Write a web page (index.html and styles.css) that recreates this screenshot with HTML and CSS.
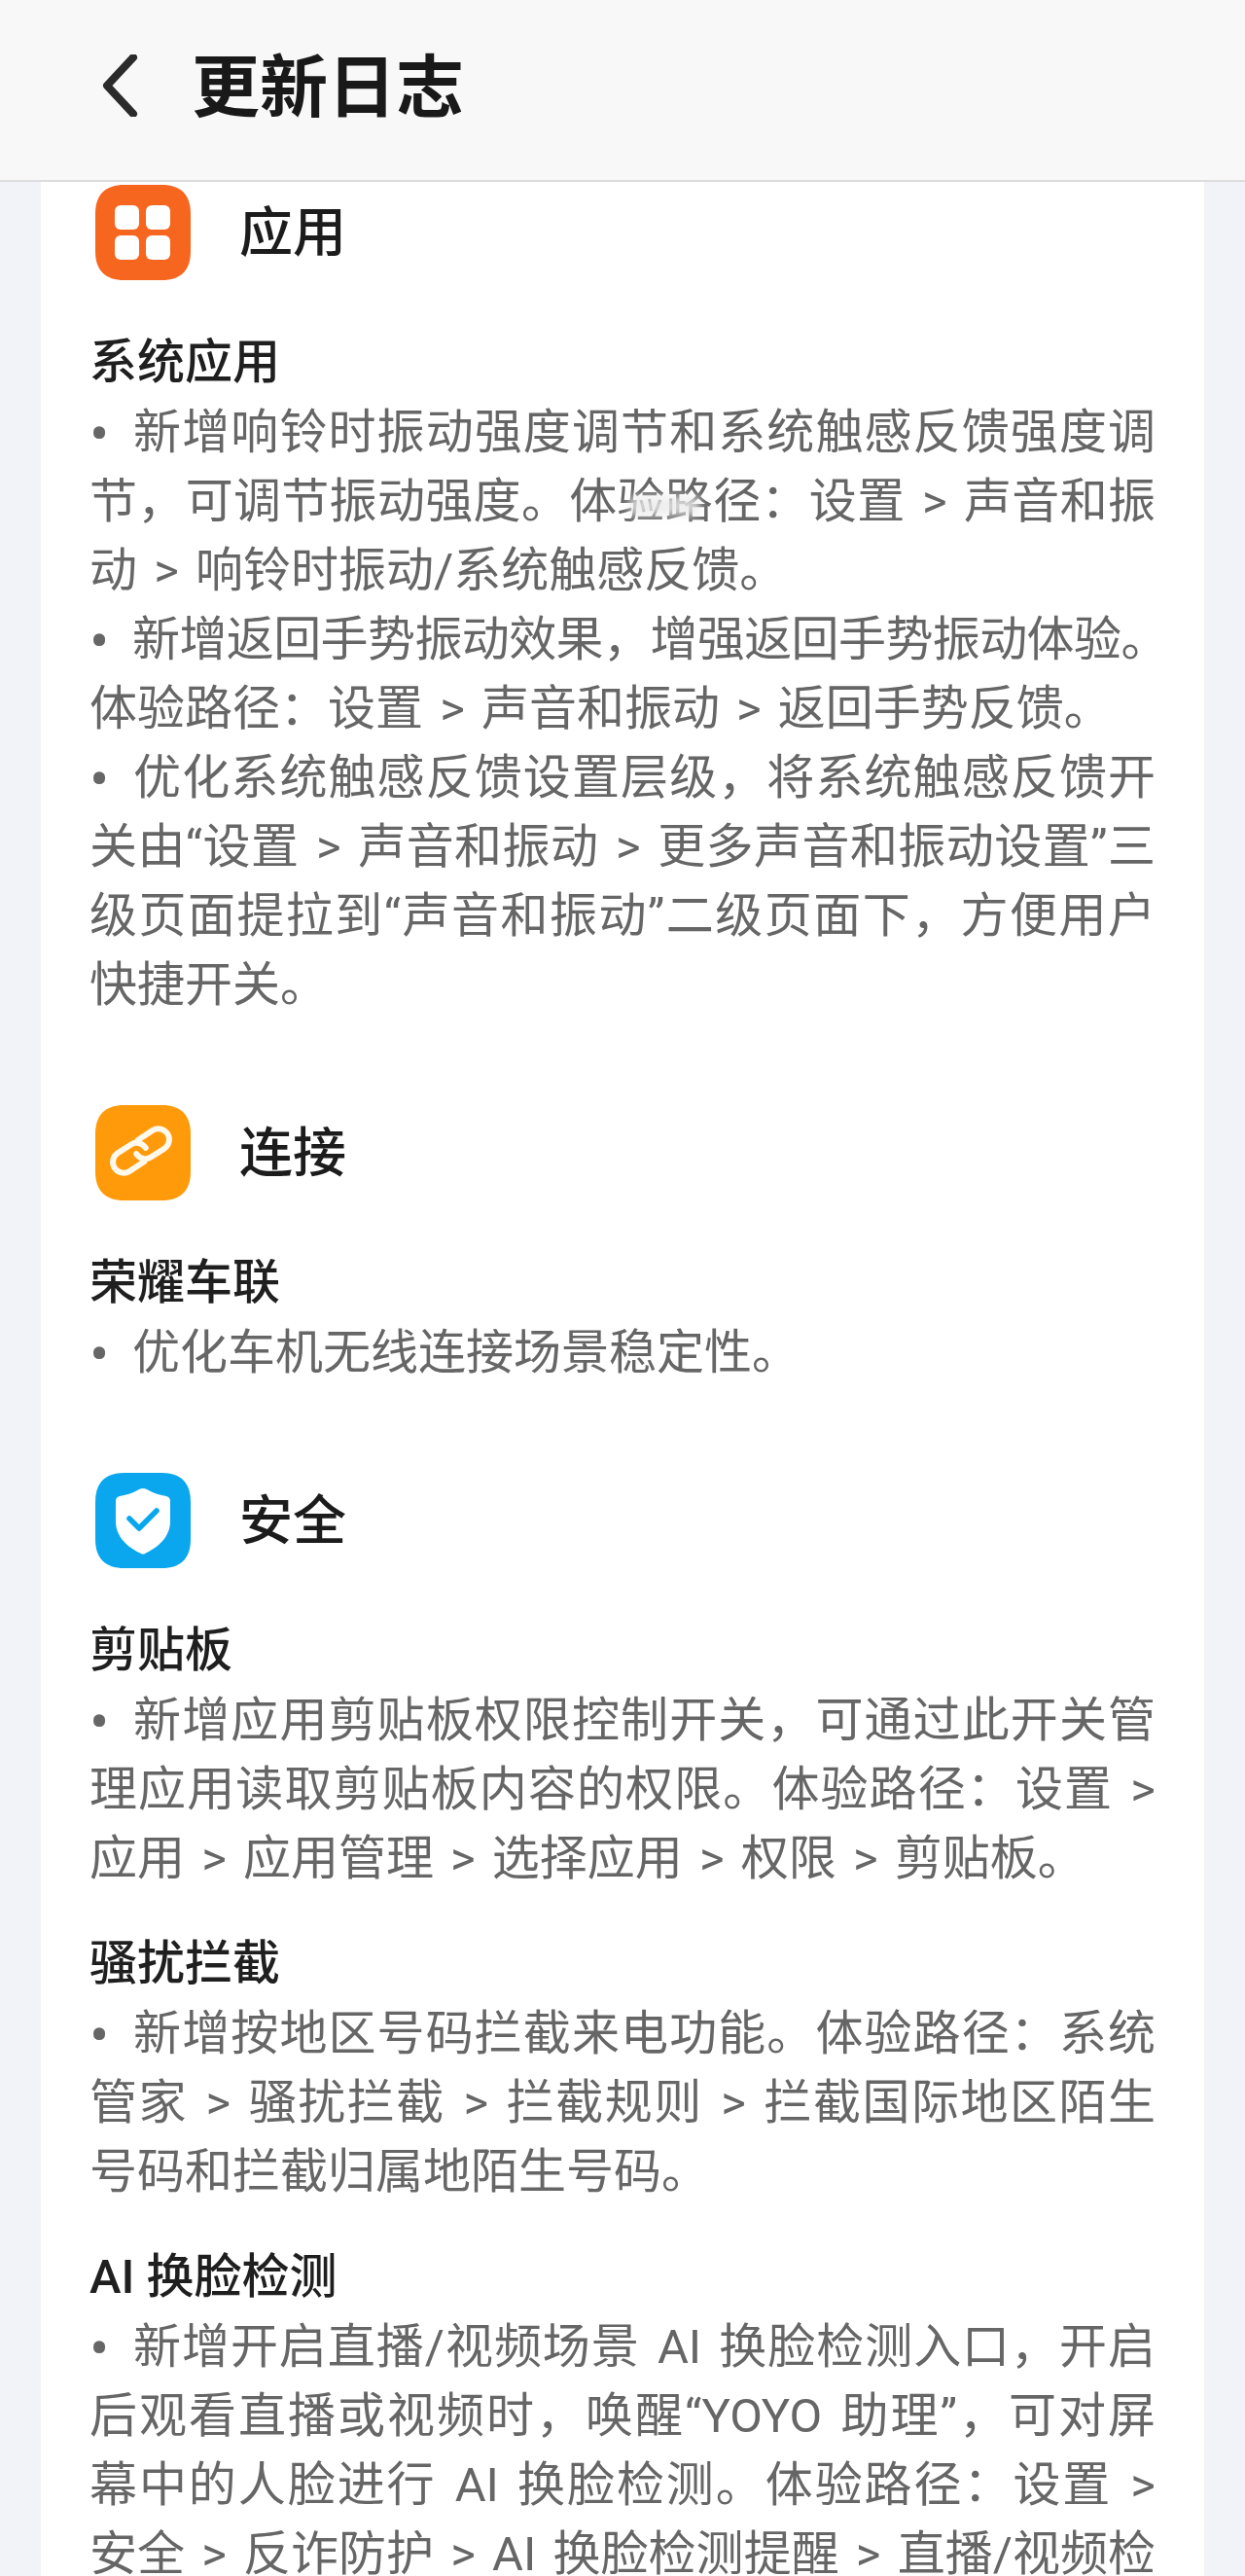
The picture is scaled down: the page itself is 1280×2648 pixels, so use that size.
FILE: index.html
```html
<!DOCTYPE html>
<html lang="zh-CN">
<head>
<meta charset="utf-8">
<title>更新日志</title>
<link rel="stylesheet" href="styles.css">
</head>
<body>
<header class="bar">
  <svg class="back" viewBox="0 0 40 64"><path d="M33 3 L6 32 L33 61" /></svg>
  <h1 class="bar-title">更新日志</h1>
</header>
<main class="card">
  <section class="section first">
    <div class="sec-head">
      <svg class="sec-icon" viewBox="0 0 98 98"><path d="M30 0 H68 C88 0 98 10 98 30 V68 C98 88 88 98 68 98 H30 C10 98 0 88 0 68 V30 C0 10 10 0 30 0 Z" fill="#f7661f"/><g fill="#fff"><rect x="20" y="21" width="25" height="25" rx="6"/><rect x="52" y="21" width="25" height="25" rx="6"/><rect x="20" y="52" width="25" height="25" rx="6"/><rect x="52" y="52" width="25" height="25" rx="6"/></g></svg>
      <h2 class="sec-title">应用</h2>
    </div>
    <div class="item">
      <h3 class="item-title">系统应用</h3>
      <div class="item-text">
        <span class="ln"><span class="bullet">•</span>新增响铃时振动强度调节和系统触感反馈强度调</span>
        <span class="ln">节，可调节振动强度。体验路径：设置 &gt; 声音和振</span>
        <span class="ln last">动 &gt; 响铃时振动/系统触感反馈。</span>
        <span class="ln last tight"><span class="bullet">•</span>新增返回手势振动效果，增强返回手势振动体验。</span>
        <span class="ln last">体验路径：设置 &gt; 声音和振动 &gt; 返回手势反馈。</span>
        <span class="ln"><span class="bullet">•</span>优化系统触感反馈设置层级，将系统触感反馈开</span>
        <span class="ln">关由“设置 &gt; 声音和振动 &gt; 更多声音和振动设置”三</span>
        <span class="ln">级页面提拉到“声音和振动”二级页面下，方便用户</span>
        <span class="ln last">快捷开关。</span>
      </div>
    </div>
  </section>
  <section class="section">
    <div class="sec-head">
      <svg class="sec-icon" viewBox="0 0 98 98"><path d="M30 0 H68 C88 0 98 10 98 30 V68 C98 88 88 98 68 98 H30 C10 98 0 88 0 68 V30 C0 10 10 0 30 0 Z" fill="#ff9a0a"/><g fill="none" stroke="#fff8ec" stroke-width="5.5" stroke-linecap="round" transform="rotate(-33 47 47) translate(47 47) scale(1.08) translate(-47 -47)"><path d="M44 57.25 H27.25 A10.25 10.25 0 0 1 27.25 36.75 H42 A10.25 10.25 0 0 1 52.25 47"/><path d="M50 36.75 H66.75 A10.25 10.25 0 0 1 66.75 57.25 H52 A10.25 10.25 0 0 1 41.75 47"/></g></svg>
      <h2 class="sec-title">连接</h2>
    </div>
    <div class="item">
      <h3 class="item-title">荣耀车联</h3>
      <div class="item-text">
        <span class="ln last"><span class="bullet">•</span>优化车机无线连接场景稳定性。</span>
      </div>
    </div>
  </section>
  <section class="section">
    <div class="sec-head">
      <svg class="sec-icon" viewBox="0 0 98 98"><path d="M30 0 H68 C88 0 98 10 98 30 V68 C98 88 88 98 68 98 H30 C10 98 0 88 0 68 V30 C0 10 10 0 30 0 Z" fill="#0aa6ee"/><path d="M49 16 Q51 16 53 17 C60 21 67 23 73 24 Q77 25 77 29 V50 C77 66 64 77 51 83 Q49 84 47 83 C34 77 21 66 21 50 V29 Q21 25 25 24 C31 23 38 21 45 17 Q47 16 49 16 Z" fill="#fff"/><path d="M35 47 L45 57 L63 39" fill="none" stroke="#0aa6ee" stroke-width="5.5" stroke-linecap="round" stroke-linejoin="round"/></svg>
      <h2 class="sec-title">安全</h2>
    </div>
    <div class="item">
      <h3 class="item-title">剪贴板</h3>
      <div class="item-text">
        <span class="ln"><span class="bullet">•</span>新增应用剪贴板权限控制开关，可通过此开关管</span>
        <span class="ln">理应用读取剪贴板内容的权限。体验路径：设置 &gt;</span>
        <span class="ln last">应用 &gt; 应用管理 &gt; 选择应用 &gt; 权限 &gt; 剪贴板。</span>
      </div>
    </div>
    <div class="item">
      <h3 class="item-title">骚扰拦截</h3>
      <div class="item-text">
        <span class="ln"><span class="bullet">•</span>新增按地区号码拦截来电功能。体验路径：系统</span>
        <span class="ln">管家 &gt; 骚扰拦截 &gt; 拦截规则 &gt; 拦截国际地区陌生</span>
        <span class="ln last">号码和拦截归属地陌生号码。</span>
      </div>
    </div>
    <div class="item">
      <h3 class="item-title">AI 换脸检测</h3>
      <div class="item-text">
        <span class="ln"><span class="bullet">•</span>新增开启直播/视频场景 AI 换脸检测入口，开启</span>
        <span class="ln">后观看直播或视频时，唤醒“YOYO 助理”，可对屏</span>
        <span class="ln">幕中的人脸进行 AI 换脸检测。体验路径：设置 &gt;</span>
        <span class="ln">安全 &gt; 反诈防护 &gt; AI 换脸检测提醒 &gt; 直播/视频检</span>
      </div>
    </div>
  </section>
  <div class="smudge"></div>
</main>
</body>
</html>
```
FILE: styles.css
```css
* { box-sizing: border-box; }
html, body { margin: 0; padding: 0; }
body {
  height: 2648px;
  overflow: hidden;
  background: #f1f3f8;
  font-family: Roboto, "Noto Sans CJK SC", sans-serif;
}
.bar {
  height: 187px;
  background: #f8f8f8;
  border-bottom: 2px solid #dcdcdc;
  display: flex;
  align-items: center;
  padding: 0 0 9px 104px;
  gap: 53px;
}
.back { width: 40px; height: 64px; flex: none; }
.back path { fill: none; stroke: #2b2b2b; stroke-width: 8; stroke-linecap: round; stroke-linejoin: round; }
.bar-title { margin: 6px 0 0; font-size: 70px; line-height: 90px; font-weight: 700; color: #191919; }
.card {
  position: relative;
  margin: 0 42px;
  padding: 2px 50px 0 50px;
  background: #fff;
  height: 2461px;
  overflow: hidden;
}
.section { margin-top: 87px; }
.section.first { margin-top: 0; }
.sec-head { display: flex; align-items: center; gap: 50px; padding-left: 6px; height: 100px; }
.sec-icon { width: 98px; height: 98px; flex: none; }
.sec-title { margin: 0; font-size: 55px; line-height: 70px; font-weight: 500; color: #1c1c1c; }
.item { margin-top: 38px; }
.sec-head + .item { margin-top: 49px; }
.item-title { margin: 0 0 2px; font-size: 49px; line-height: 69px; font-weight: 500; color: #1f1f1f; }
.item-text { font-size: 49px; line-height: 71px; color: #666; }
.ln { display: block; white-space: nowrap; word-spacing: 5px; text-align: justify; text-align-last: justify; }
.ln.last { text-align: left; text-align-last: left; }
.ln.tight { letter-spacing: -0.6px; }
.bullet { display: inline-block; width: 44px; font-size: 60px; line-height: 60px; vertical-align: -6px; text-align: left; text-align-last: left; }
.smudge {
  position: absolute;
  left: 605px;
  top: 323px;
  width: 72px;
  height: 20px;
  background: rgba(235,235,235,.8);
  filter: blur(4px);
}
```
